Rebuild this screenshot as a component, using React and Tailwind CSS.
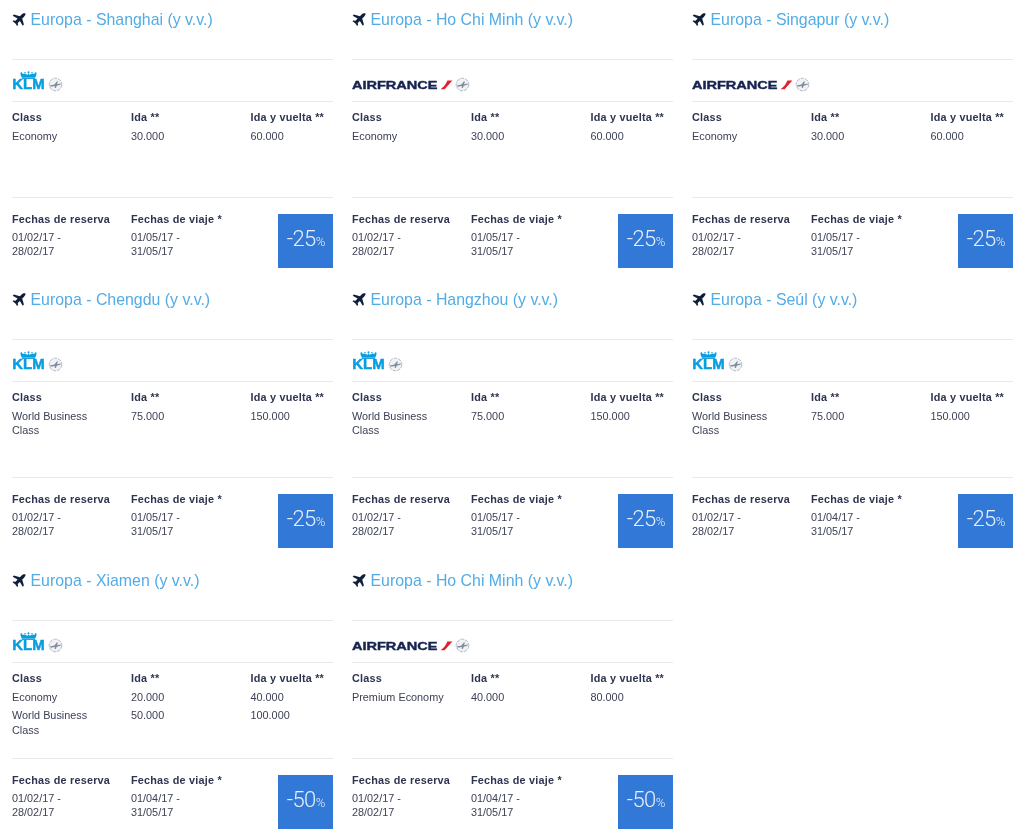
import React from "react";

const Plane = () => (
  <svg width="14" height="14" viewBox="0 0 14 14" className="shrink-0 mt-[2px]">
    <path d="M13.4 0.6 C12.5 -0.1 10.8 0.4 9.6 1.6 L7.9 3.3 L1.9 1.6 L0.7 2.8 L5.6 5.6 L3.5 7.8 L1.4 7.4 L0.5 8.3 L3.2 10.2 L5.2 13 L6.1 12.1 L5.7 10 L7.9 7.9 L10.7 12.8 L11.9 11.6 L10.2 5.6 L11.9 3.9 C13.1 2.7 14 1.2 13.4 0.6 Z" fill="#10203c" />
  </svg>
);

const Skyteam = () => (
  <svg width="15" height="15" viewBox="0 0 15 15" className="shrink-0">
    <circle cx="7.5" cy="7.5" r="6.3" fill="#f0f2f5" stroke="#b3bac5" strokeWidth="1" strokeDasharray="3.5 1" />
    <path d="M1.8 8.6 L6.4 7.6 L8.8 4.6 L10 4.6 L9 7.2 L12.6 6.6 L12.8 7.6 L8.8 8.8 L7.8 11 L6.7 11 L6.9 9 L2.6 9.8 Z" fill="#7f8b9d" />
  </svg>
);

const KLM = () => (
  <div className="flex items-end gap-[3px]">
    <svg width="33" height="24" viewBox="0 0 33 24" className="shrink-0 -mb-[3px]">
      <g fill="#0a9ee0">
        <circle cx="16.5" cy="1.2" r="1" />
        <circle cx="9.4" cy="2.3" r="1" />
        <circle cx="23.6" cy="2.3" r="1" />
        <circle cx="13" cy="1.8" r="0.8" />
        <circle cx="20" cy="1.8" r="0.8" />
        <path d="M8.4 3.3 C10.8 2.5 14 2.9 15.2 3.9 L16.5 2.3 L17.8 3.9 C19 2.9 22.2 2.5 24.6 3.3 L23.2 6.7 L9.8 6.7 Z" />
        <rect x="10" y="7.1" width="13" height="0.9" />
      </g>
      <text x="0.3" y="18.4" textLength="32.4" lengthAdjust="spacingAndGlyphs" fill="#0a9ee0" stroke="#0a9ee0" strokeWidth="0.45" fontFamily="Liberation Sans" fontWeight="700" fontSize="13.8">KLM</text>
    </svg>
    <Skyteam />
  </div>
);

const AirFrance = () => (
  <div className="flex items-center gap-[1px]">
    <svg width="102" height="12" viewBox="0 0 102 12" className="shrink-0">
      <text x="0" y="10" textLength="85.5" lengthAdjust="spacingAndGlyphs" fill="#16244f" stroke="#16244f" strokeWidth="0.4" fontFamily="Liberation Sans" fontWeight="700" fontSize="11">AIRFRANCE</text>
      <path d="M95.4 1.6 L100.4 1.6 L92.6 10.2 L88.6 10.2 C91.4 8.6 93.8 5.4 95.4 1.6 Z" fill="#e2202c" />
    </svg>
    <Skyteam />
  </div>
);

const deal = (city, airline, rows, travelStart, discount) => ({ city, airline, rows, travelStart, discount });
const deals = [
  deal("Shanghai", "klm", [["Economy", "30.000", "60.000"]], "01/05/17", "25"),
  deal("Ho Chi Minh", "af", [["Economy", "30.000", "60.000"]], "01/05/17", "25"),
  deal("Singapur", "af", [["Economy", "30.000", "60.000"]], "01/05/17", "25"),
  deal("Chengdu", "klm", [["World Business Class", "75.000", "150.000"]], "01/05/17", "25"),
  deal("Hangzhou", "klm", [["World Business Class", "75.000", "150.000"]], "01/05/17", "25"),
  deal("Seúl", "klm", [["World Business Class", "75.000", "150.000"]], "01/04/17", "25"),
  deal("Xiamen", "klm", [["Economy", "20.000", "40.000"], ["World Business Class", "50.000", "100.000"]], "01/04/17", "50"),
  deal("Ho Chi Minh", "af", [["Premium Economy", "40.000", "80.000"]], "01/04/17", "50"),
];

const Card = ({ d }) => (
  <div className="flex flex-col">
    <div className="h-[60px] border-b border-[#e6e9ee] flex items-start pt-[11px] shrink-0">
      <Plane />
      <span className="ml-[4.5px] text-[15.9px] leading-[18px] text-[#52ace6]">Europa - {d.city} (y v.v.)</span>
    </div>
    <div className="h-[42px] border-b border-[#e6e9ee] flex items-end pb-[9px] shrink-0">
      {d.airline === "klm" ? <KLM /> : <AirFrance />}
    </div>
    <div className="h-[96px] border-b border-[#e6e9ee] pt-[8px] shrink-0">
      <div className="grid grid-cols-[119px_119px_1fr] font-bold tracking-[0.2px] leading-[14px] mb-[5px] text-[#2f3550]">
        <span>Class</span>
        <span>Ida **</span>
        <span className="pl-[0.5px]">Ida y vuelta **</span>
      </div>
      <div className="flex flex-col gap-[4px]">
        {d.rows.map((r) => (
          <div key={r[0]} className="grid grid-cols-[119px_119px_1fr] leading-[14.4px]">
            <span className="pr-[18px]">{r[0]}</span>
            <span>{r[1]}</span>
            <span className="pl-[0.5px]">{r[2]}</span>
          </div>
        ))}
      </div>
    </div>
    <div className="flex justify-between items-start">
      <div className="grid grid-cols-[119px_119px] pt-[14px]">
        <div>
          <div className="font-bold tracking-[0.2px] leading-[14px] mb-[4px] text-[#2f3550] whitespace-nowrap">Fechas de reserva</div>
          <div className="leading-[14.4px]">01/02/17 -<br />28/02/17</div>
        </div>
        <div>
          <div className="font-bold tracking-[0.2px] leading-[14px] mb-[4px] text-[#2f3550] whitespace-nowrap">Fechas de viaje *</div>
          <div className="leading-[14.4px]">{d.travelStart} -<br />31/05/17</div>
        </div>
      </div>
      <div className="mt-[16px] w-[55px] h-[54px] bg-[#3278d6] text-[#e6effa] flex items-baseline justify-center pt-[13px] pl-[1px] font-['Roboto',sans-serif] font-light">
        <span className="text-[22px] leading-[24px] tracking-[-0.6px]">-{d.discount}</span>
        <span className="text-[13px] leading-[24px]">%</span>
      </div>
    </div>
  </div>
);

export default function App() {
  return (
    <div className="w-[1024px] h-[835px] overflow-hidden bg-white px-[12px] font-['Liberation_Sans',Arial,sans-serif] text-[10.85px] text-[#3d4156] blur-[0.4px]">
      <div className="grid grid-cols-[321px_321px_321px] grid-rows-[280px_281px_274px] gap-x-[19px]">
        {deals.map((d, i) => (
          <Card key={i} d={d} />
        ))}
      </div>
    </div>
  );
}
